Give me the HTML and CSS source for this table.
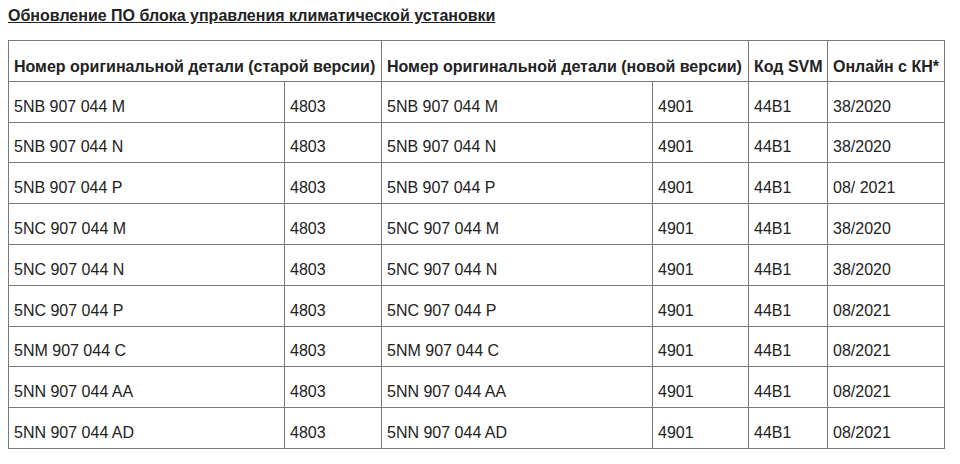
FILE: index.html
```html
<!DOCTYPE html>
<html lang="ru">
<head>
<meta charset="utf-8">
<link rel="stylesheet" href="styles.css">
</head>
<body>
<div class="title">Обновление ПО блока управления климатической установки</div>
<table class="parts">
<colgroup>
<col class="c1"><col class="c2"><col class="c3"><col class="c4"><col class="c5"><col class="c6">
</colgroup>
<thead>
<tr><th colspan="2">Номер оригинальной детали (старой версии)</th><th colspan="2">Номер оригинальной детали (новой версии)</th><th>Код SVM</th><th>Онлайн с КН*</th></tr>
</thead>
<tbody>
<tr><td>5NB 907 044 M</td><td>4803</td><td>5NB 907 044 M</td><td>4901</td><td>44B1</td><td>38/2020</td></tr>
<tr><td>5NB 907 044 N</td><td>4803</td><td>5NB 907 044 N</td><td>4901</td><td>44B1</td><td>38/2020</td></tr>
<tr><td>5NB 907 044 P</td><td>4803</td><td>5NB 907 044 P</td><td>4901</td><td>44B1</td><td>08/ 2021</td></tr>
<tr><td>5NC 907 044 M</td><td>4803</td><td>5NC 907 044 M</td><td>4901</td><td>44B1</td><td>38/2020</td></tr>
<tr><td>5NC 907 044 N</td><td>4803</td><td>5NC 907 044 N</td><td>4901</td><td>44B1</td><td>38/2020</td></tr>
<tr><td>5NC 907 044 P</td><td>4803</td><td>5NC 907 044 P</td><td>4901</td><td>44B1</td><td>08/2021</td></tr>
<tr><td>5NM 907 044 C</td><td>4803</td><td>5NM 907 044 C</td><td>4901</td><td>44B1</td><td>08/2021</td></tr>
<tr><td>5NN 907 044 AA</td><td>4803</td><td>5NN 907 044 AA</td><td>4901</td><td>44B1</td><td>08/2021</td></tr>
<tr><td>5NN 907 044 AD</td><td>4803</td><td>5NN 907 044 AD</td><td>4901</td><td>44B1</td><td>08/2021</td></tr>
</tbody>
</table>
</body>
</html>
```
FILE: styles.css
```css
html, body {
  margin: 0;
  background: #fff;
}
body {
  padding: 0 8px;
  font-family: "Liberation Sans", Arial, sans-serif;
  color: #222;
}
.title {
  font-size: 16px;
  font-weight: bold;
  text-decoration: underline;
  line-height: 18px;
  padding-top: 7px;
  margin-bottom: 15px;
}
.parts {
  border-collapse: collapse;
  table-layout: fixed;
  width: 936px;
  font-size: 16px;
}
.c1 { width: 276px; }
.c2 { width: 97px; }
.c3 { width: 271px; }
.c4 { width: 96px; }
.c5 { width: 79px; }
.c6 { width: 117px; }
.parts th, .parts td {
  border: 1px solid #7a7a7a;
  padding: 0 0 0 5px;
  text-align: left;
  white-space: nowrap;
  overflow: hidden;
  vertical-align: bottom;
  line-height: 18px;
  box-sizing: border-box;
  height: 40.8px;
}
.parts th {
  font-weight: bold;
  font-size: 16px;
  padding-bottom: 5px;
}
.parts td {
  padding-bottom: 6px;
}
```
